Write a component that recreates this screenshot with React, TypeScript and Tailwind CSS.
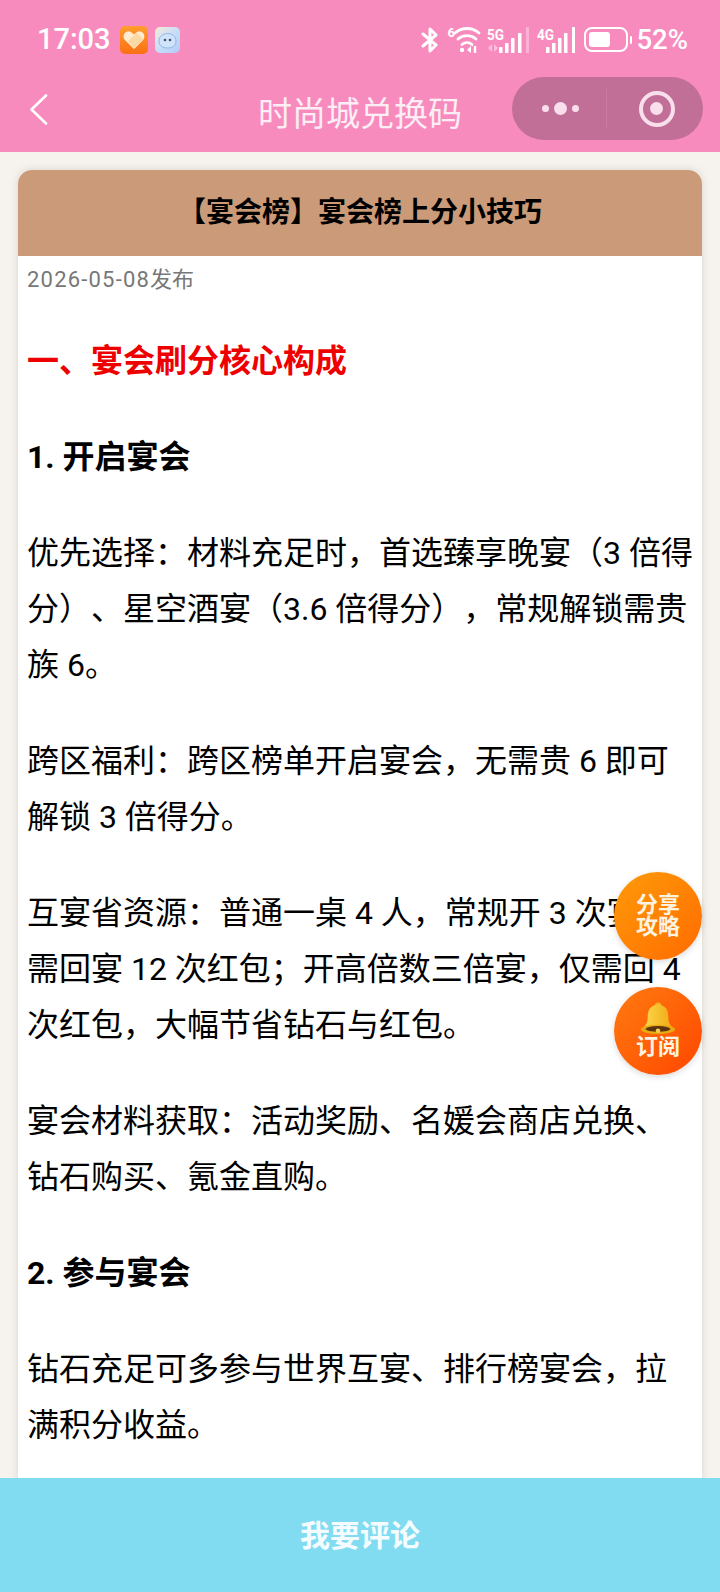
import React from 'react';

const cjk = "font-['Roboto','Noto_Sans_CJK_SC',sans-serif]";

const Para = ({ children, className = '' }: { children: React.ReactNode; className?: string }) => (
  <p className={`mb-[40px] text-[32px] leading-[56px] text-black [text-spacing-trim:space-all] ${className}`}>{children}</p>
);

// bar offsets differ a little between the two SIM icons
const SignalBars = ({ label, bars, width, dim }: { label: string; bars: number[]; width: number; dim?: boolean }) => (
  <svg width={width} height="26" viewBox={`0 0 ${width} 26`} fill="#fff">
    <text x="0" y="12.5" fontSize="15" fontWeight="700" fontFamily="Roboto" fill="#fff" textLength="17" lengthAdjust="spacingAndGlyphs">{label}</text>
    {dim && <path d="M1 21 L5 17 V25 Z M7 17 L11 21 L7 25 Z" opacity="0.45" />}
    <rect x={bars[0]} y="20" width="3.5" height="6" rx="0.6" />
    <rect x={bars[1]} y="16" width="3.5" height="10" rx="0.6" />
    <rect x={bars[2]} y="11" width="3.5" height="15" rx="0.6" />
    <rect x={bars[3]} y="6" width="3.5" height="20" rx="0.6" />
    <rect x={bars[4]} y="0" width="3" height="26" rx="0.6" opacity={dim ? 0.35 : 1} />
  </svg>
);

const StatusBar = () => (
  <div className="flex h-[76px] items-center justify-between pl-[37px] pr-[32px] pt-[3px] text-white">
    <div className="flex items-center">
      <span className="text-[29px] font-medium leading-none">17:03</span>
      <svg className="ml-[9px]" width="28" height="28" viewBox="0 0 28 28">
        <defs>
          <linearGradient id="ho" x1="0" y1="0" x2="0" y2="1">
            <stop offset="0" stopColor="#ff9d2e" />
            <stop offset="1" stopColor="#fb6f14" />
          </linearGradient>
        </defs>
        <rect width="28" height="28" rx="5" fill="url(#ho)" />
        <path d="M14 23 L4.5 13.5 C1.5 9 6.5 3.5 11 6 L14 8.5 L17 6 C21.5 3.5 26.5 9 23.5 13.5 Z" fill="#fdeccf" />
        <path d="M14 23 L8 15 L17 7 L23.5 13.5 Z" fill="#fbd9a5" />
      </svg>
      <svg className="ml-[7px]" width="25" height="26" viewBox="0 0 25 26">
        <defs>
          <linearGradient id="qq" x1="0" y1="0" x2="1" y2="1">
            <stop offset="0" stopColor="#f5ead8" />
            <stop offset="0.6" stopColor="#bfdcfb" />
            <stop offset="1" stopColor="#b9c6f5" />
          </linearGradient>
        </defs>
        <rect width="25" height="26" rx="5" fill="url(#qq)" />
        <path d="M4 14 C4 4 21 4 21 14 C21 19 17 21 12.5 21 C8 21 4 19 4 14 Z" fill="#cfe3fb" stroke="#8eb6ea" strokeWidth="1" />
        <circle cx="10" cy="13" r="1.3" fill="#3f5270" />
        <circle cx="15" cy="13" r="1.3" fill="#3f5270" />
      </svg>
    </div>
    <div className="flex items-center">
      <svg width="18" height="26" viewBox="0 0 18 26" fill="none" stroke="#fff" strokeWidth="3" strokeLinecap="round" strokeLinejoin="round">
        <path d="M2 7 L15 18 L9 24 V2 L15 8 L2 19" />
      </svg>
      <div className="relative ml-[8px] h-[26px] w-[34px]">
        <span className="absolute left-0 top-[-1px] text-[13px] font-bold leading-none">6</span>
        <svg width="34" height="26" viewBox="0 0 34 26" fill="none" stroke="#fff" strokeWidth="2.8" strokeLinecap="round">
          <path d="M8 6 C15 0 25 0 32 6" />
          <path d="M11 12 C16 7.5 24 7.5 29 12" />
          <path d="M15 17.5 C18 15 22 15 25 17.5" />
          <circle cx="15" cy="23" r="2.2" fill="#fff" stroke="none" />
          <path d="M20 23 L24 19 V26 Z" fill="#fff" stroke="none" />
          <path d="M28 19 V26" strokeWidth="2.4" strokeLinecap="butt" />
        </svg>
      </div>
      <div className="ml-[6px]"><SignalBars label="5G" bars={[12, 18, 24, 31, 39]} width={42} dim /></div>
      <div className="ml-[8px]"><SignalBars label="4G" bars={[9, 15, 21, 27, 35]} width={38} /></div>
      <div className="ml-[9px] flex items-center">
        <div className="flex h-[25px] w-[44px] items-center rounded-[8px] border-[2px] border-white p-[3px]">
          <div className="h-full w-[21px] rounded-[3px] bg-white" />
        </div>
        <div className="ml-[2px] h-[8px] w-[2px] rounded-full bg-white" />
      </div>
      <span className="ml-[4px] text-[27.5px] font-medium leading-none">52%</span>
    </div>
  </div>
);

const NavBar = () => (
  <div className="relative flex h-[76px] items-center justify-center text-white">
    <svg className="absolute left-[28px] top-[18px]" width="22" height="32" viewBox="0 0 22 32" fill="none" stroke="#fff" strokeWidth="2.6" strokeLinecap="round" strokeLinejoin="round">
      <path d="M18 1.5 L3.5 15.5 L18 29.5" />
    </svg>
    <span className="text-[34px] leading-none text-[#fdeef5]">时尚城兑换码</span>
    <div className="absolute left-[512px] top-[1px] flex h-[63px] w-[191px] items-center rounded-full bg-[#c26f98]">
      <div className="flex h-[40px] w-[95px] items-center justify-center gap-[5px] border-r border-[#c97ba1] pl-[2px]">
        <span className="h-[7px] w-[7px] rounded-full bg-[#f9dfeb]" />
        <span className="h-[13px] w-[13px] rounded-full bg-[#f9dfeb]" />
        <span className="h-[7px] w-[7px] rounded-full bg-[#f9dfeb]" />
      </div>
      <div className="flex flex-1 items-center justify-center pl-[3px]">
        <div className="flex h-[36px] w-[36px] items-center justify-center rounded-full border-[4px] border-[#f9dfeb]">
          <div className="h-[13px] w-[13px] rounded-full bg-[#f9dfeb]" />
        </div>
      </div>
    </div>
  </div>
);

const Bell = () => (
  <svg className="mt-[-3px]" width="36" height="34" viewBox="0 0 38 36">
    <defs>
      <linearGradient id="bell" x1="0" y1="0" x2="1" y2="0">
        <stop offset="0" stopColor="#ffdb4f" />
        <stop offset="1" stopColor="#eda60e" />
      </linearGradient>
    </defs>
    <circle cx="19" cy="4" r="3.5" fill="#eeb326" />
    <path d="M19 3 C28 3 30 10 30 17 C30 23 33 26 37 29 L1 29 C5 26 8 23 8 17 C8 10 10 3 19 3 Z" fill="url(#bell)" />
    <ellipse cx="19" cy="29" rx="18" ry="5" fill="#e9a912" />
    <ellipse cx="19" cy="28.5" rx="13" ry="3" fill="#5a3310" />
    <circle cx="19" cy="30.5" r="2.4" fill="#f5cf4b" />
  </svg>
);

export default function App() {
  return (
    <div className={`relative h-[1592px] w-[720px] overflow-hidden bg-[#f6f3ee] ${cjk}`}>
      <div className="h-[152px] bg-[#f88bbd]">
        <StatusBar />
        <NavBar />
      </div>

      <div className="mx-[18px] mt-[18px] overflow-hidden rounded-t-[14px] bg-white shadow-[0_0_8px_rgba(0,0,0,0.12)]">
        <div className="flex h-[86px] items-center justify-center bg-[#cb9b79] text-[28px] font-bold text-black">
          【宴会榜】宴会榜上分小技巧
        </div>
        <div className="px-[9px]">
          <div className="mt-[8px] text-[22px] leading-[32px] text-[#777]">
            <span className="tracking-[1.2px]">2026-05-08</span>发布
          </div>
          <div className="mt-[37px]">
            <Para className="font-bold !text-[#ee0000]">一、宴会刷分核心构成</Para>
            <Para className="font-bold">1. 开启宴会</Para>
            <Para>优先选择：材料充足时，首选臻享晚宴（3 倍得分）、星空酒宴（3.6 倍得分），常规解锁需贵族 6。</Para>
            <Para>跨区福利：跨区榜单开启宴会，无需贵 6 即可解锁 3 倍得分。</Para>
            <Para>互宴省资源：普通一桌 4 人，常规开 3 次宴<br />需回宴 12 次红包；开高倍数三倍宴，仅需回 4 次红包，大幅节省钻石与红包。</Para>
            <Para>宴会材料获取：活动奖励、名媛会商店兑换、钻石购买、氪金直购。</Para>
            <Para className="font-bold">2. 参与宴会</Para>
            <Para>钻石充足可多参与世界互宴、排行榜宴会，拉满积分收益。</Para>
          </div>
        </div>
      </div>

      <div className="absolute left-[614px] top-[872px] flex h-[88px] w-[88px] flex-col items-center justify-center rounded-full bg-gradient-to-br from-[#ff9a0a] to-[#ff6a00] text-[22px] font-bold leading-[22px] text-[#fdf3e0] shadow-[0_2px_6px_rgba(0,0,0,0.15)]">
        <span>分享</span>
        <span>攻略</span>
      </div>
      <div className="absolute left-[614px] top-[987px] flex h-[88px] w-[88px] flex-col items-center justify-center rounded-full bg-gradient-to-br from-[#ff7a10] to-[#ff4400] text-[22px] font-bold leading-[22px] text-[#fdf3e0] shadow-[0_2px_6px_rgba(0,0,0,0.15)]">
        <Bell />
        <span>订阅</span>
      </div>

      <div className="absolute inset-x-0 bottom-0 flex h-[114px] items-center justify-center bg-[#81dcf1] text-[30px] font-bold text-[#f4fcff]">
        我要评论
      </div>
    </div>
  );
}
